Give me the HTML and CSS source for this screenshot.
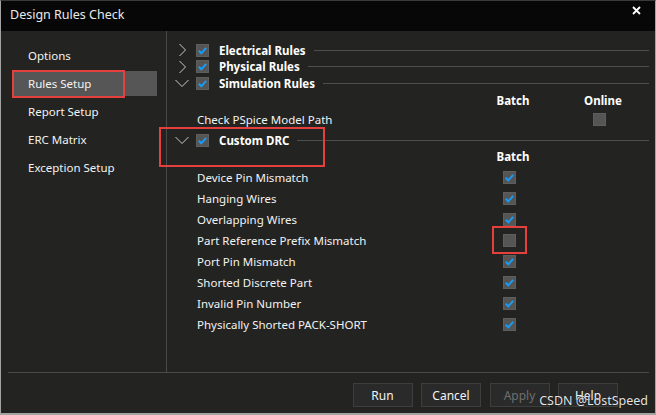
FILE: index.html
```html
<!DOCTYPE html>
<html>
<head>
<meta charset="utf-8">
<link rel="stylesheet" href="styles.css">
</head>
<body>
<div class="window">
  <div class="titlebar">
    <span class="title">Design Rules Check</span>
    <svg class="close" width="9" height="9" viewBox="0 0 9 9"><path d="M1 1 L8 8 M8 1 L1 8" stroke="#fff" stroke-width="1.8"/></svg>
  </div>
  <div class="main">
    <div class="nav">
      <div class="nav-item">Options</div>
      <div class="nav-item selected">Rules Setup</div>
      <div class="nav-item">Report Setup</div>
      <div class="nav-item">ERC Matrix</div>
      <div class="nav-item">Exception Setup</div>
    </div>
    <div class="content">
      <div class="group">
        <span class="chev"><svg width="14" height="14" viewBox="0 0 14 14"><path d="M4.5 1 L10.5 7 L4.5 13" fill="none" stroke="#c9c9c9" stroke-width="1"/></svg></span>
        <span class="cb on"><svg width="13" height="13" viewBox="0 0 13 13"><path d="M2.8 6.8 L5.3 9.3 L10.2 3.8" fill="none" stroke="#1a9cf5" stroke-width="2"/></svg></span>
        <span class="glabel">Electrical Rules</span>
        <span class="rule"></span>
      </div>
      <div class="group">
        <span class="chev"><svg width="14" height="14" viewBox="0 0 14 14"><path d="M4.5 1 L10.5 7 L4.5 13" fill="none" stroke="#c9c9c9" stroke-width="1"/></svg></span>
        <span class="cb on"><svg width="13" height="13" viewBox="0 0 13 13"><path d="M2.8 6.8 L5.3 9.3 L10.2 3.8" fill="none" stroke="#1a9cf5" stroke-width="2"/></svg></span>
        <span class="glabel">Physical Rules</span>
        <span class="rule"></span>
      </div>
      <div class="group">
        <span class="chev"><svg width="14" height="14" viewBox="0 0 14 14"><path d="M0.5 4 L7 10.5 L13.5 4" fill="none" stroke="#c9c9c9" stroke-width="1"/></svg></span>
        <span class="cb on"><svg width="13" height="13" viewBox="0 0 13 13"><path d="M2.8 6.8 L5.3 9.3 L10.2 3.8" fill="none" stroke="#1a9cf5" stroke-width="2"/></svg></span>
        <span class="glabel">Simulation Rules</span>
        <span class="rule"></span>
      </div>
      <div class="grid head1">
        <span></span><span class="colhead">Batch</span><span></span><span class="colhead">Online</span><span></span>
      </div>
      <div class="grid item pspice">
        <span class="ilabel">Check PSpice Model Path</span><span></span><span></span>
        <span class="cell ocell"><span class="cb"></span></span><span></span>
      </div>
      <div class="group custom">
        <span class="chev"><svg width="14" height="14" viewBox="0 0 14 14"><path d="M0.5 4 L7 10.5 L13.5 4" fill="none" stroke="#c9c9c9" stroke-width="1"/></svg></span>
        <span class="cb on"><svg width="13" height="13" viewBox="0 0 13 13"><path d="M2.8 6.8 L5.3 9.3 L10.2 3.8" fill="none" stroke="#1a9cf5" stroke-width="2"/></svg></span>
        <span class="glabel">Custom DRC</span>
        <span class="rule"></span>
      </div>
      <div class="grid head2">
        <span></span><span class="colhead">Batch</span><span></span><span></span><span></span>
      </div>
      <div class="grid item"><span class="ilabel">Device Pin Mismatch</span><span class="cell bcell"><span class="cb on"><svg width="13" height="13" viewBox="0 0 13 13"><path d="M2.8 6.8 L5.3 9.3 L10.2 3.8" fill="none" stroke="#1a9cf5" stroke-width="2"/></svg></span></span><span></span><span></span><span></span></div>
      <div class="grid item"><span class="ilabel">Hanging Wires</span><span class="cell bcell"><span class="cb on"><svg width="13" height="13" viewBox="0 0 13 13"><path d="M2.8 6.8 L5.3 9.3 L10.2 3.8" fill="none" stroke="#1a9cf5" stroke-width="2"/></svg></span></span><span></span><span></span><span></span></div>
      <div class="grid item"><span class="ilabel">Overlapping Wires</span><span class="cell bcell"><span class="cb on"><svg width="13" height="13" viewBox="0 0 13 13"><path d="M2.8 6.8 L5.3 9.3 L10.2 3.8" fill="none" stroke="#1a9cf5" stroke-width="2"/></svg></span></span><span></span><span></span><span></span></div>
      <div class="grid item"><span class="ilabel">Part Reference Prefix Mismatch</span><span class="cell bcell"><span class="cb marked"></span></span><span></span><span></span><span></span></div>
      <div class="grid item"><span class="ilabel">Port Pin Mismatch</span><span class="cell bcell"><span class="cb on"><svg width="13" height="13" viewBox="0 0 13 13"><path d="M2.8 6.8 L5.3 9.3 L10.2 3.8" fill="none" stroke="#1a9cf5" stroke-width="2"/></svg></span></span><span></span><span></span><span></span></div>
      <div class="grid item"><span class="ilabel">Shorted Discrete Part</span><span class="cell bcell"><span class="cb on"><svg width="13" height="13" viewBox="0 0 13 13"><path d="M2.8 6.8 L5.3 9.3 L10.2 3.8" fill="none" stroke="#1a9cf5" stroke-width="2"/></svg></span></span><span></span><span></span><span></span></div>
      <div class="grid item"><span class="ilabel">Invalid Pin Number</span><span class="cell bcell"><span class="cb on"><svg width="13" height="13" viewBox="0 0 13 13"><path d="M2.8 6.8 L5.3 9.3 L10.2 3.8" fill="none" stroke="#1a9cf5" stroke-width="2"/></svg></span></span><span></span><span></span><span></span></div>
      <div class="grid item"><span class="ilabel">Physically Shorted PACK-SHORT</span><span class="cell bcell"><span class="cb on"><svg width="13" height="13" viewBox="0 0 13 13"><path d="M2.8 6.8 L5.3 9.3 L10.2 3.8" fill="none" stroke="#1a9cf5" stroke-width="2"/></svg></span></span><span></span><span></span><span></span></div>
    </div>
  </div>
  <div class="footer">
    <button class="btn">Run</button>
    <button class="btn">Cancel</button>
    <button class="btn disabled">Apply</button>
    <button class="btn">Help</button>
  </div>
  <div class="watermark">CSDN @LostSpeed</div>
</div>
</body>
</html>
```

FILE: styles.css
```css
html, body {
  margin: 0;
  padding: 0;
  background: #232422;
}
body {
  font-family: "Segoe UI", "Noto Sans", "Open Sans", sans-serif;
  font-size: 11.5px;
  color: #f2f2f2;
}
.window {
  position: relative;
  width: 656px;
  height: 415px;
  box-sizing: border-box;
  border: 1px solid #a3a3a3;
  border-top-color: #3a3a3a;
  border-bottom-width: 2px;
  background: #232422;
  display: flex;
  flex-direction: column;
}
.titlebar {
  height: 30px;
  background: #070707;
  display: flex;
  align-items: center;
  justify-content: space-between;
  padding: 0 14px 0 9px;
  flex: none;
}
.title {
  font-size: 12.5px;
  color: #eaeaea;
  margin-top: -3px;
}
.close {
  margin-top: -12px;
}
.main {
  margin: 0 6px 0 7px;
  height: 341px;
  display: flex;
  border-bottom: 1px solid #4a4a4a;
  flex: none;
}
.nav {
  width: 159px;
  border-right: 1px solid #4a4a4a;
  padding-top: 11px;
  box-sizing: border-box;
  flex: none;
}
.nav-item {
  position: relative;
  height: 28px;
  line-height: 28px;
  margin-left: 5px;
  width: 144px;
  padding-left: 15px;
  box-sizing: border-box;
}
.nav-item.selected {
  background: linear-gradient(#232422 0 1px, #565656 1px 26px, #232422 26px);
}
.nav-item.selected::after {
  content: "";
  position: absolute;
  left: -1px;
  top: 0;
  width: 113px;
  height: 28px;
  border: 2px solid #e5403e;
  box-sizing: border-box;
}
.content {
  flex: 1;
  padding-top: 11px;
  position: relative;
}
.group {
  display: flex;
  align-items: center;
  height: 16.5px;
  padding-left: 8px;
}
.chev {
  width: 14px;
  height: 14px;
  display: flex;
}
.cb {
  width: 13px;
  height: 13px;
  background: #555555;
  box-shadow: inset 0 0 0 1px #5e5e5e;
  display: inline-flex;
  flex: none;
  position: relative;
}
.group .cb {
  margin-left: 7px;
}
.glabel {
  font-weight: bold;
  color: #ffffff;
  margin-left: 10px;
  white-space: nowrap;
}
.rule {
  flex: 1;
  height: 1px;
  background: #4e4e4e;
  margin-left: 8px;
}
.grid {
  display: grid;
  grid-template-columns: 1fr 60px 30px 60px 16px;
  align-items: center;
  padding-left: 30px;
}
.colhead {
  font-weight: bold;
  color: #ffffff;
  text-align: center;
}
.head1 {
  height: 17px;
}
.pspice {
  height: 22px;
}
.cell {
  display: flex;
  justify-content: center;
}
.bcell .cb {
  margin-right: 8px;
}
.ocell .cb {
  margin-right: 8px;
}
.custom {
  height: 21px;
  position: relative;
}
.custom::after {
  content: "";
  position: absolute;
  left: -8px;
  top: -3px;
  width: 166px;
  height: 40px;
  border: 2px solid #e5403e;
  box-sizing: border-box;
}
.head2 {
  height: 16px;
  align-items: start;
  line-height: 12px;
}
.item {
  height: 21px;
}
.ilabel {
  white-space: nowrap;
}
.cb.marked::after {
  content: "";
  position: absolute;
  left: -11px;
  top: -8px;
  width: 35px;
  height: 28px;
  border: 2px solid #e5403e;
  box-sizing: border-box;
}
.footer {
  flex: 1;
  display: flex;
  justify-content: flex-end;
  align-items: flex-start;
  gap: 8.5px;
  padding: 10px 37px 0 0;
}
.btn {
  width: 60px;
  height: 24px;
  background: #2a2a2a;
  border: 1px solid #3e3e3e;
  color: #f2f2f2;
  font-family: inherit;
  font-size: 12px;
  padding: 0;
}
.btn.disabled {
  color: #6f6f6f;
}
.watermark {
  position: absolute;
  right: 7px;
  bottom: 4px;
  font-family: "Noto Sans", sans-serif;
  font-size: 12.5px;
  color: #e4e4e4;
  text-shadow: 0 0 1px #000;
}
```
